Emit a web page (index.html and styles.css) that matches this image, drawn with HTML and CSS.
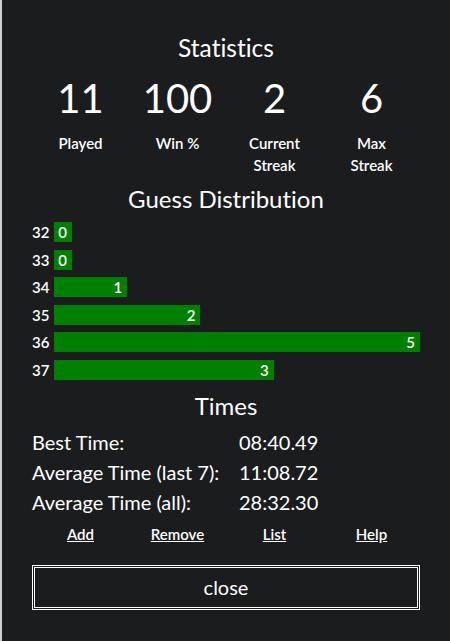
FILE: index.html
```html
<!DOCTYPE html>
<html>
<head>
<meta charset="utf-8">
<link rel="stylesheet" href="styles.css">
</head>
<body>
<div class="modal">
  <h1 class="title">Statistics</h1>
  <div class="stats">
    <div class="stat"><div class="num">11</div><div class="lbl">Played</div></div>
    <div class="stat"><div class="num">100</div><div class="lbl">Win %</div></div>
    <div class="stat"><div class="num">2</div><div class="lbl">Current<br>Streak</div></div>
    <div class="stat"><div class="num">6</div><div class="lbl">Max<br>Streak</div></div>
  </div>
  <h2 class="subtitle">Guess Distribution</h2>
  <div class="dist">
    <div class="row"><span class="guess">32</span><div class="track"><div class="bar" style="width:0%">0</div></div></div>
    <div class="row"><span class="guess">33</span><div class="track"><div class="bar" style="width:0%">0</div></div></div>
    <div class="row"><span class="guess">34</span><div class="track"><div class="bar" style="width:20%">1</div></div></div>
    <div class="row"><span class="guess">35</span><div class="track"><div class="bar" style="width:40%">2</div></div></div>
    <div class="row"><span class="guess">36</span><div class="track"><div class="bar" style="width:100%">5</div></div></div>
    <div class="row"><span class="guess">37</span><div class="track"><div class="bar" style="width:60%">3</div></div></div>
  </div>
  <h2 class="subtitle times-title">Times</h2>
  <div class="times">
    <span>Best Time:</span><span>08:40.49</span>
    <span>Average Time (last 7):</span><span>11:08.72</span>
    <span>Average Time (all):</span><span>28:32.30</span>
  </div>
  <div class="links">
    <a href="#">Add</a><a href="#">Remove</a><a href="#">List</a><a href="#">Help</a>
  </div>
  <button class="close">close</button>
</div>
</body>
</html>
```
FILE: styles.css
```css
html, body {
  margin: 0;
  padding: 0;
  background: #1b1c1e;
}
body {
  font-family: Lato, "Open Sans", sans-serif;
  font-variant-ligatures: none;
  color: #fff;
}
.modal {
  box-sizing: border-box;
  width: 450px;
  height: 641px;
  border-left: 2px solid #cfcfcf;
  padding: 32px 30px 0 30px;
  background: #1b1c1e;
  display: flex;
  flex-direction: column;
}
.title {
  margin: 0;
  text-align: center;
  font-size: 24.5px;
  font-weight: 400;
  line-height: 32px;
}
.stats {
  display: grid;
  grid-template-columns: repeat(4, 1fr);
  margin-top: 10px;
  text-align: center;
}
.num {
  font-size: 40px;
  line-height: 48px;
  font-weight: 400;
}
.lbl {
  font-size: 15px;
  line-height: 22px;
  font-weight: 600;
  margin-top: 10px;
}
.subtitle {
  margin: 8px 0 0 0;
  text-align: center;
  font-size: 24px;
  font-weight: 400;
  line-height: 30px;
}
.dist {
  display: flex;
  flex-direction: column;
  gap: 7.5px;
  margin-top: 8px;
}
.row {
  display: flex;
  align-items: center;
  height: 20px;
}
.guess {
  width: 22px;
  font-size: 15px;
  font-weight: 600;
}
.track {
  flex: 1;
  height: 20px;
}
.bar {
  box-sizing: border-box;
  height: 20px;
  min-width: 18px;
  background: #008000;
  text-align: right;
  padding: 0 5px 0 4px;
  font-size: 15px;
  font-weight: 600;
  line-height: 20px;
}
.times-title {
  margin-top: 11px;
}
.times {
  display: grid;
  grid-template-columns: 207px 1fr;
  row-gap: 6px;
  margin-top: 9px;
  font-size: 20px;
  line-height: 24px;
}
.links {
  display: grid;
  grid-template-columns: repeat(4, 1fr);
  text-align: center;
  margin-top: 10px;
}
.links a {
  color: #fff;
  font-size: 15px;
  font-weight: 600;
  line-height: 20px;
  text-decoration: underline;
}
.close {
  margin-top: 21px;
  height: 45px;
  width: 100%;
  background: transparent;
  border: 3px double #fff;
  color: #fff;
  font-family: inherit;
  font-size: 20px;
}
```
